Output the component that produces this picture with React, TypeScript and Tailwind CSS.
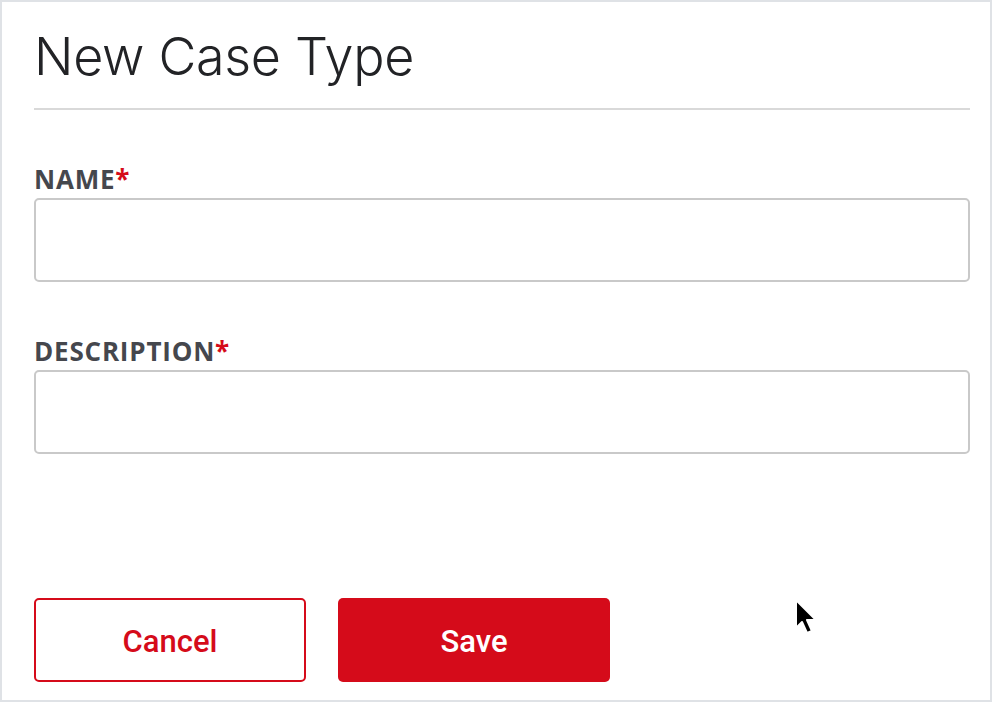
export default function App() {
  return (
    <div className="relative flex h-[702px] w-[992px] flex-col border-2 border-[#dfe2e6] bg-white pl-[32px] pr-[20px] font-['Inter',sans-serif]">
      <div className="border-b-2 border-[#d9d9d9] pt-[26px] pb-[22px]">
        <h1 className="text-[52px] font-light leading-[58px] tracking-[-0.3px] text-[#222326]">
          New Case Type
        </h1>
      </div>

      <form className="flex flex-1 flex-col" onSubmit={(e) => e.preventDefault()}>
        <label className="mt-[55px] block font-['Open_Sans',sans-serif] text-[26px] font-bold leading-[29px] tracking-[0.8px] text-[#45474d]">
          NAME<span className="text-[#d50b1a]">*</span>
        </label>
        <input className="mt-[4px] h-[84px] w-full rounded-[5px] border-2 border-[#c9c9c9] px-4 text-[24px] outline-none" />

        <label className="mt-[55px] block font-['Open_Sans',sans-serif] text-[26px] font-bold leading-[29px] tracking-[0.8px] text-[#45474d]">
          DESCRIPTION<span className="text-[#d50b1a]">*</span>
        </label>
        <input className="mt-[4px] h-[84px] w-full rounded-[5px] border-2 border-[#c9c9c9] px-4 text-[24px] outline-none" />

        <div className="mt-auto mb-[18px] flex gap-[32px]">
          <button
            type="button"
            className="flex h-[84px] w-[272px] items-center justify-center rounded-[5px] border-2 border-[#d50b1a] bg-white pt-[4px] font-['Roboto',sans-serif] text-[31px] font-medium text-[#d50b1a]"
          >
            Cancel
          </button>
          <button
            type="submit"
            className="flex h-[84px] w-[272px] items-center justify-center rounded-[5px] bg-[#d50b1a] pt-[4px] font-['Roboto',sans-serif] text-[31px] font-medium text-white"
          >
            Save
          </button>
        </div>
      </form>

      <svg
        className="pointer-events-none absolute left-[790px] top-[595px]"
        width="30"
        height="42"
        viewBox="0 0 30 42"
      >
        <path
          d="M4 3 L4 31 L10 25 L15 36 L20 34 L15 23 L24 23 Z"
          fill="#000"
          stroke="#fff"
          strokeWidth="2"
          strokeLinejoin="round"
        />
      </svg>
    </div>
  );
}
